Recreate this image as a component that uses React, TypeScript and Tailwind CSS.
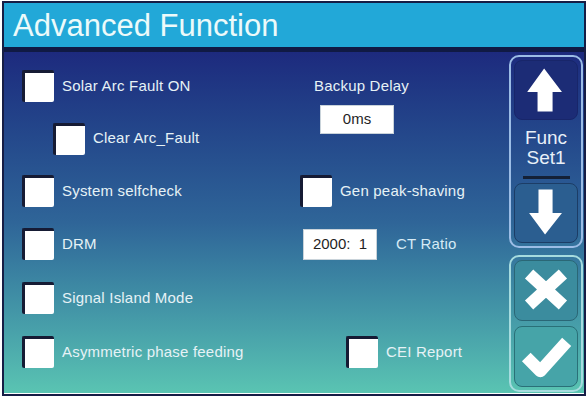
import React from 'react';

const font = { fontFamily: '"Liberation Sans", Arial, sans-serif' };

function Box() {
  return <div className="h-[32px] w-[32px] shrink-0 rounded-[2px] border-l-[3px] border-t-[3px] border-[#161b34] bg-white" />;
}

function CheckRow({ label, indent = '' }: { label: string; indent?: string }) {
  return (
    <div className={`flex items-center gap-[8px] ${indent}`}>
      <Box />
      <span className="text-[15px] tracking-[0.2px] text-[#e6f2f6]">{label}</span>
    </div>
  );
}

function ValueBox({ value, className = '' }: { value: string; className?: string }) {
  return (
    <div className={`flex w-[74px] items-center justify-center whitespace-pre border border-[#c9d3da] bg-white text-[15px] text-[#1f1f1f] ${className}`}>
      {value}
    </div>
  );
}

function ArrowUp() {
  return (
    <svg viewBox="0 0 66 60" className="h-full w-full">
      <polygon points="31,7 50,32 40,32 40,53 24,53 24,32 13,32" fill="#fff" />
    </svg>
  );
}

function ArrowDown() {
  return (
    <svg viewBox="0 0 66 60" className="h-full w-full">
      <polygon points="25,5 40,5 40,30 50,30 32,53 15,30 25,30" fill="#fff" />
    </svg>
  );
}

function Cross() {
  return (
    <svg viewBox="0 0 66 61" className="h-full w-full">
      <path d="M15 13 L51 46 M51 13 L15 46" stroke="#fff" strokeWidth="13" />
    </svg>
  );
}

function Tick() {
  return (
    <svg viewBox="0 0 66 61" className="h-full w-full">
      <path d="M12 31 L27 46 L55 15" stroke="#fff" strokeWidth="13" fill="none" strokeLinejoin="round" />
    </svg>
  );
}

export default function App() {
  return (
    <div className="h-[406px] w-[587px] overflow-hidden bg-white pt-[1px]" style={font}>
      <div className="ml-[2px] flex h-[395px] w-[584px] flex-col border-2 border-[#161d45]">
        <div className="flex h-[44px] items-center bg-[#22a8d8] pl-[9px] text-[31px] leading-none text-[#ecfafa]">
          Advanced Function
        </div>
        <div className="h-[5px] bg-[#101a44]" />
        <div className="flex h-[341px] bg-linear-to-b from-[#1d2a7e] via-[#2f6598] to-[#5ac4b2]">
          <div className="grid flex-1 grid-cols-[278px_1fr] grid-rows-[52px_53px_52px_54px_54px_54px] pl-[18px] pt-[8px]">
            <CheckRow label="Solar Arc Fault ON" />
            <div className="row-span-2 flex flex-col items-start pt-[17px]">
              <span className="pl-[14px] text-[15px] leading-[17px] tracking-[0.2px] text-[#e6f2f6]">Backup Delay</span>
              <ValueBox value="0ms" className="ml-[20px] mt-[11px] h-[29px]" />
            </div>
            <CheckRow label="Clear Arc_Fault" indent="pl-[31px]" />
            <CheckRow label="System selfcheck" />
            <CheckRow label="Gen peak-shaving" />
            <CheckRow label="DRM" />
            <div className="flex items-center gap-[19px] pl-[3px]">
              <ValueBox value="2000:  1" className="h-[31px]" />
              <span className="text-[15px] tracking-[0.2px] text-[#d6eaf5]">CT Ratio</span>
            </div>
            <CheckRow label="Signal Island Mode" />
            <div />
            <CheckRow label="Asymmetric phase feeding" />
            <CheckRow label="CEI Report" indent="pl-[46px]" />
          </div>
          <div className="mb-[1px] mr-[1px] mt-[3px] flex w-[74px] flex-col gap-[7px]">
            <div className="flex h-[193px] flex-col rounded-[10px] border-2 border-[#9cbde6] px-[3px] pb-[3px] pt-[3px]">
              <div className="h-[60px] rounded-[8px] border border-[#18266a] bg-[#1c2c76]">
                <ArrowUp />
              </div>
              <div className="flex h-[56px] flex-col items-center justify-center text-[19px] leading-[20px] text-[#e8f0f8]">
                <span>Func</span>
                <span>Set1</span>
              </div>
              <div className="mx-auto h-[3px] w-[47px] bg-[#142036]" />
              <div className="mt-[4px] h-[60px] rounded-[8px] border border-[#1c3d66] bg-[#2b5e90]">
                <ArrowDown />
              </div>
            </div>
            <div className="flex h-[137px] flex-col gap-[5px] rounded-[10px] border-2 border-[#a6dcdf] px-[3px] pb-[3px] pt-[3px]">
              <div className="h-[61px] rounded-[8px] border border-[#2a6776] bg-[#3b8c9e]">
                <Cross />
              </div>
              <div className="h-[61px] rounded-[8px] border border-[#2a7078] bg-[#46a4a8]">
                <Tick />
              </div>
            </div>
          </div>
        </div>
      </div>
    </div>
  );
}
